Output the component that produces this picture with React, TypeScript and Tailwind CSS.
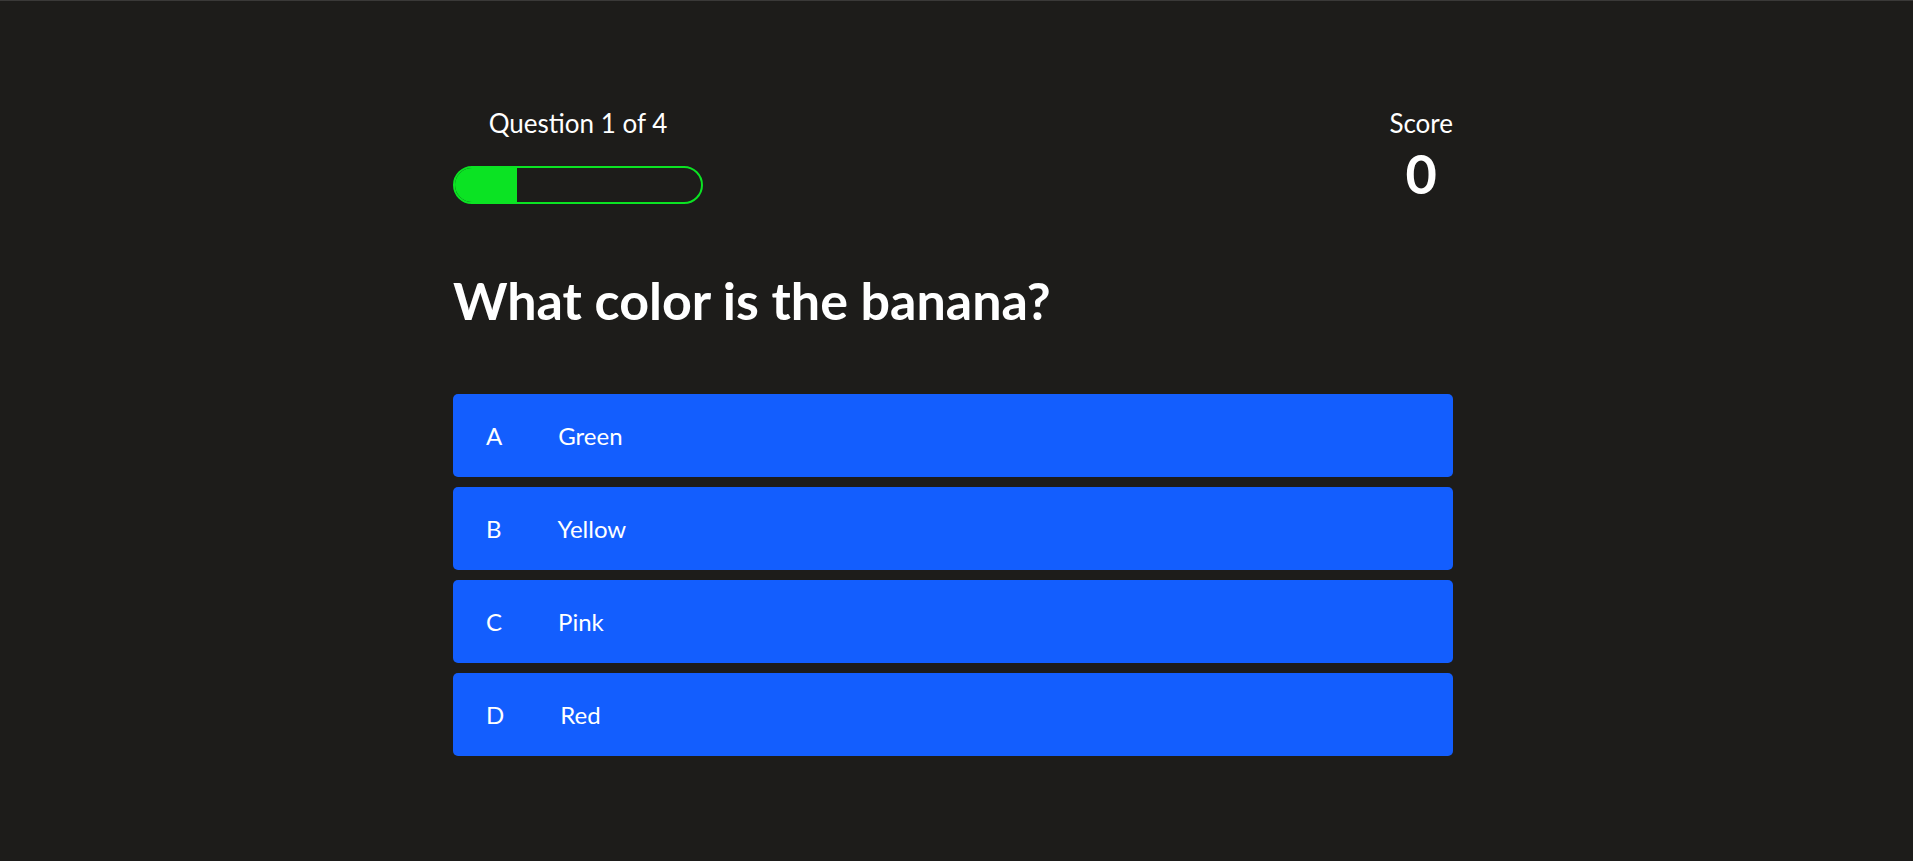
import React, { useState } from 'react';

const options = [
  { letter: 'A', text: 'Green' },
  { letter: 'B', text: 'Yellow' },
  { letter: 'C', text: 'Pink' },
  { letter: 'D', text: 'Red' },
];

export default function App() {
  const [current] = useState(1);
  const total = 4;
  const [score] = useState(0);

  return (
    <div className="min-h-[861px] bg-[#1d1c1a] border-t border-[#3a3938] text-white font-['Comic_Sans_MS','Lato',sans-serif]">
      <div className="flex justify-center pr-[7px]">
        <div className="w-[1000px] pt-[106px]">
          <div className="flex items-start justify-between">
            <div className="flex w-[250px] flex-col items-center">
              <p className="text-[26px] leading-[32px]">
                Question {current} of {total}
              </p>
              <div className="mt-[27px] h-[38px] w-full overflow-hidden rounded-full border-2 border-[#0be323]">
                <div className="h-full w-[25%] bg-[#0be323]" />
              </div>
            </div>
            <div className="flex flex-col items-center">
              <p className="text-[26px] leading-[32px]">Score</p>
              <p className="mt-[8px] text-[54px] font-bold leading-[54px]">{score}</p>
            </div>
          </div>

          <h1 className="mt-[66px] text-[52px] font-bold leading-[60px]">
            What color is the banana?
          </h1>

          <div className="mt-[64px] flex flex-col gap-[10px]">
            {options.map((o) => (
              <button
                key={o.letter}
                className="flex h-[83px] items-center rounded-[5px] bg-[#135efe] px-[33px] text-left text-[24px]"
              >
                <span className="mr-[56px]">{o.letter}</span>
                <span>{o.text}</span>
              </button>
            ))}
          </div>
        </div>
      </div>
    </div>
  );
}
